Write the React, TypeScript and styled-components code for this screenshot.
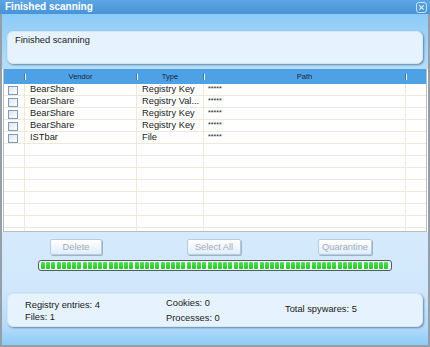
import React from 'react';
import styled, { createGlobalStyle } from 'styled-components';

interface Threat {
  vendor: string;
  type: string;
  path: string;
}

const threats: Threat[] = [
  { vendor: 'BearShare', type: 'Registry Key', path: '*****' },
  { vendor: 'BearShare', type: 'Registry Val...', path: '*****' },
  { vendor: 'BearShare', type: 'Registry Key', path: '*****' },
  { vendor: 'BearShare', type: 'Registry Key', path: '*****' },
  { vendor: 'ISTbar', type: 'File', path: '*****' },
];

const EMPTY_ROWS = 8;
const SEGMENTS = 67;
const columns = '21px 112px 67px 202px 1fr';

const GlobalStyle = createGlobalStyle`
  * { box-sizing: border-box; }
  html, body { margin: 0; padding: 0; background: #fff; }
  body { font-family: "Liberation Sans", Arial, sans-serif; }
`;

const Window = styled.div`
  width: 430px;
  height: 347px;
  display: flex;
  flex-direction: column;
  overflow: hidden;
`;

const TitleBar = styled.div`
  flex: 0 0 14px;
  display: flex;
  align-items: center;
  justify-content: space-between;
  padding: 0 3px 0 5px;
  background: linear-gradient(#5da6e3, #4893d6);
`;

const TitleText = styled.span`
  color: #fff;
  font-weight: bold;
  font-size: 10px;
  line-height: 14px;
`;

const Body = styled.div`
  flex: 1;
  display: flex;
  flex-direction: column;
  border: 2px solid #959fa9;
  border-top: none;
`;

const TopArea = styled.div`
  padding: 17px 5px 5px;
  background: linear-gradient(#8ccbf8, #b6def9);
`;

const Panel = styled.div`
  background: #e6f2fd;
  border: 1px solid #d4e7f7;
  border-radius: 6px;
  box-shadow: 1px 1px 2px rgba(60, 90, 125, 0.65);
`;

const MessagePanel = styled(Panel)`
  height: 33px;
  padding: 2px 7px;
  font-size: 9.3px;
  line-height: 12px;
  color: #1a1a1a;
`;

const Table = styled.div`
  margin: 0 1px;
  height: 163px;
  display: flex;
  flex-direction: column;
  background: #fff;
  border: 1px solid #b3bec8;
  border-top: none;
  overflow: hidden;
`;

const HeaderRow = styled.div`
  flex: 0 0 15px;
  display: grid;
  grid-template-columns: ${columns};
  background: #4ea1e4;
`;

const HeaderCell = styled.div`
  display: flex;
  align-items: center;
`;

const HeaderLabel = styled.span`
  flex: 1;
  text-align: center;
  font-size: 7.5px;
  color: #14263b;
`;

const Grip = styled.span`
  flex: 0 0 2px;
  height: 6px;
  margin-right: -1px;
  background: #f2f7fc;
  border-left: 1px solid #56708b;
`;

const Rows = styled.div`
  flex: 1;
  overflow: hidden;
`;

const Row = styled.div`
  display: grid;
  grid-template-columns: ${columns};
  height: 12px;
  border-bottom: 1px solid #eee9d8;
`;

const Cell = styled.div<{ $pad?: number; $last?: boolean }>`
  padding-left: ${(p) => p.$pad ?? 0}px;
  border-right: ${(p) => (p.$last ? 'none' : '1px solid #eee9d8')};
  font-size: 9.3px;
  line-height: 11px;
  color: #1a1a1a;
  white-space: nowrap;
  overflow: hidden;
`;

const StarCell = styled(Cell)`
  font-size: 7px;
  line-height: 8px;
  padding-top: 1px;
`;

const CheckCell = styled(Cell)`
  padding-top: 2px;
`;

const CheckBox = styled.span`
  display: block;
  width: 10px;
  height: 9px;
  border: 1px solid #7f9bb7;
  background: linear-gradient(135deg, #dde4ec, #ffffff);
`;

const BottomArea = styled.div`
  flex: 1;
  display: flex;
  flex-direction: column;
  padding: 7px 5px 0;
  background: linear-gradient(#d6eafc 0px, #d0e7fb 58px, #b4dbf9 95px, #8fcbf6 100%);
`;

const ButtonRow = styled.div`
  display: flex;
  height: 16px;
`;

const Button = styled.button<{ $ml: number; $w: number }>`
  margin-left: ${(p) => p.$ml}px;
  width: ${(p) => p.$w}px;
  height: 16px;
  padding: 0;
  border: 1px solid #b7cbdd;
  border-radius: 2px;
  background: linear-gradient(#ffffff, #dfeefb);
  box-shadow: 1px 1px 0 #9db3c8;
  font-family: "Liberation Sans", Arial, sans-serif;
  font-size: 9.3px;
  color: #a3adb8;
`;

const Progress = styled.div`
  margin: 5px 0 0 31px;
  width: 354px;
  height: 11px;
  display: flex;
  align-items: center;
  justify-content: space-between;
  padding: 0 2px;
  border: 1px solid #505b66;
  border-radius: 3px;
  background: #eef3f7;
`;

const Segment = styled.span`
  flex: 0 0 4px;
  height: 7px;
  border-radius: 1px;
  background: linear-gradient(#55e055, #22c822);
`;

const SummaryPanel = styled(Panel)`
  margin-top: 22px;
  height: 34px;
  display: grid;
  grid-template-columns: 141px 119px 1fr;
  padding-left: 17px;
`;

const StatColumn = styled.div<{ $top: number; $gap: number }>`
  display: flex;
  flex-direction: column;
  padding-top: ${(p) => p.$top}px;
  gap: ${(p) => p.$gap}px;
`;

const StatText = styled.span`
  font-size: 9.3px;
  line-height: 11px;
  color: #1a1a1a;
`;

const CloseIcon = () => (
  <svg width="11" height="11" viewBox="0 0 11 11">
    <rect x="0.5" y="0.5" width="10" height="10" rx="2.5" fill="none" stroke="#c9e2f6" />
    <path d="M3.3 3.3 L7.7 7.7 M7.7 3.3 L3.3 7.7" stroke="#e4f1fc" strokeWidth="1.1" />
  </svg>
);

const App: React.FC = () => {
  return (
    <Window>
      <GlobalStyle />
      <TitleBar>
        <TitleText>Finished scanning</TitleText>
        <CloseIcon />
      </TitleBar>
      <Body>
        <TopArea>
          <MessagePanel>Finished scanning</MessagePanel>
        </TopArea>

        <Table>
          <HeaderRow>
            <HeaderCell>
              <HeaderLabel />
              <Grip />
            </HeaderCell>
            <HeaderCell>
              <HeaderLabel>Vendor</HeaderLabel>
              <Grip />
            </HeaderCell>
            <HeaderCell>
              <HeaderLabel>Type</HeaderLabel>
              <Grip />
            </HeaderCell>
            <HeaderCell>
              <HeaderLabel>Path</HeaderLabel>
              <Grip />
            </HeaderCell>
            <HeaderCell />
          </HeaderRow>
          <Rows>
            {threats.map((t, i) => (
              <Row key={i}>
                <CheckCell $pad={4}>
                  <CheckBox />
                </CheckCell>
                <Cell $pad={5}>{t.vendor}</Cell>
                <Cell $pad={5}>{t.type}</Cell>
                <StarCell $pad={4}>{t.path}</StarCell>
                <Cell $last />
              </Row>
            ))}
            {Array.from({ length: EMPTY_ROWS }).map((_, i) => (
              <Row key={`e${i}`}>
                <Cell />
                <Cell />
                <Cell />
                <Cell />
                <Cell $last />
              </Row>
            ))}
          </Rows>
        </Table>

        <BottomArea>
          <ButtonRow>
            <Button $ml={43} $w={52} disabled>Delete</Button>
            <Button $ml={85} $w={54} disabled>Select All</Button>
            <Button $ml={77} $w={54} disabled>Quarantine</Button>
          </ButtonRow>
          <Progress>
            {Array.from({ length: SEGMENTS }).map((_, i) => (
              <Segment key={i} />
            ))}
          </Progress>
          <SummaryPanel>
            <StatColumn $top={6} $gap={1}>
              <StatText>Registry entries: 4</StatText>
              <StatText>Files: 1</StatText>
            </StatColumn>
            <StatColumn $top={4} $gap={3.5}>
              <StatText>Cookies: 0</StatText>
              <StatText>Processes: 0</StatText>
            </StatColumn>
            <StatColumn $top={10} $gap={0}>
              <StatText>Total spywares: 5</StatText>
            </StatColumn>
          </SummaryPanel>
        </BottomArea>
      </Body>
    </Window>
  );
};

export default App;
